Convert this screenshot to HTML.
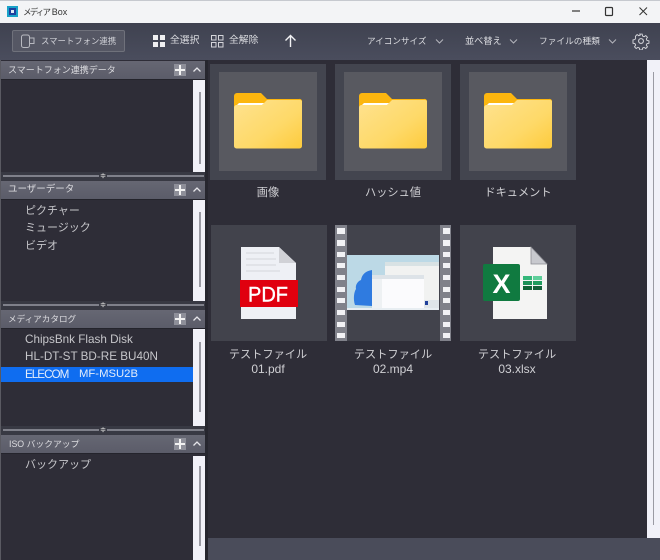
<!DOCTYPE html>
<html lang="ja"><head><meta charset="utf-8"><title>メディア Box</title>
<style>
html,body{margin:0;padding:0}
body{width:660px;height:560px;position:relative;overflow:hidden;background:#2e2d37;font-family:"Liberation Sans","Noto Sans CJK JP",sans-serif;color:#d4d4d8}
.a{position:absolute}
.t{position:absolute;white-space:nowrap}
.hd{position:absolute;left:1px;width:204px;height:19px;background:linear-gradient(#666773,#5b5c69);border-bottom:1px solid #24242c;box-sizing:border-box}
.hd span{position:absolute;left:7px;top:2px;font-size:9px;line-height:14px;color:#dcdce0;white-space:nowrap}
.plus{position:absolute;left:173px;top:3px;width:12px;height:12px;background:#8e8f99}
.plus:before{content:"";position:absolute;left:1px;right:1px;top:5px;height:1.5px;background:#f2f2f2}
.plus:after{content:"";position:absolute;top:1px;bottom:1px;left:5px;width:1.5px;background:#f2f2f2}
.hd svg{position:absolute;left:191px;top:5px}
.sb{position:absolute;left:193px;width:12px;background:#f1f1f8}
.sb i{position:absolute;left:6px;width:2px;background:#9a9aa3;display:block}
.sp{position:absolute;left:1px;width:204px;height:9px;background:#383943}
.sp:before{content:"";position:absolute;left:2px;right:1px;top:3px;height:2px;background:#7f808a}
.sp b{position:absolute;left:98px;top:0;width:8px;height:9px;background:#383943;color:#ccc;font:bold 7px/9px "Liberation Sans",sans-serif;text-align:center}
.li{position:absolute;left:25px;font-size:11px;line-height:16px;color:#c6c6ca;white-space:nowrap}
.la{font-size:11.7px}
.o{position:absolute;width:116px;height:116px;background:#43454f}
.in{position:absolute;left:9px;top:8px;width:98px;height:99px;background:#585960}
.lb{position:absolute;width:124px;text-align:center;font-size:12px;line-height:17px;color:#d0d0d4}
.lb span{font-size:11.2px}
.tb{position:absolute;top:34px;font-size:10px;line-height:14px;color:#dcdde1;white-space:nowrap}
</style></head><body>
<!-- title bar -->
<div class="a" style="left:0;top:0;width:660px;height:23px;background:#f3f4f6;border-top:1px solid #c6c9cf;box-sizing:border-box"></div>
<div class="a" style="left:7px;top:6px;width:11px;height:11px;background:#19a2c9"></div>
<div class="a" style="left:9px;top:8px;width:7px;height:7px;background:#1d3f9e"></div>
<div class="a" style="left:11px;top:10px;width:3px;height:3px;background:#dfeaf5"></div>
<div class="t" style="left:23px;top:5px;font-size:9px;line-height:14px;color:#333"><span style="font-size:8.500px;letter-spacing:-1.800px">メディア</span> Box</div>
<svg class="a" style="left:570px;top:4px" width="90" height="14" fill="none" stroke="#333">
<path d="M2 7h8" stroke-width="1.2"/><rect x="35.500" y="3.500" width="7" height="8" rx="1" stroke-width="1.2"/><path d="M69.500 3.500l7.500 7.500M77 3.500l-7.500 7.500" stroke-width="1"/></svg>
<!-- toolbar -->
<div class="a" style="left:0;top:23px;width:660px;height:37px;background:linear-gradient(#3f4250,#4a4d5d)"></div>
<div class="a" style="left:12px;top:30px;width:113px;height:22px;box-sizing:border-box;background:#555764;border:1px solid #6f717b;border-radius:2px"></div>
<svg class="a" style="left:20px;top:34px" width="16" height="15" fill="none" stroke="#b8b9c0"><rect x="1.500" y="1" width="8" height="12.500" rx="2"/><path d="M9.500 4h4.500v5.500h-4.500"/></svg>
<div class="tb" style="left:41px;font-size:8.400px;color:#cfd0d6">スマートフォン連携</div>
<svg class="a" style="left:153px;top:35px" width="12" height="12" fill="#f0f0f2"><rect width="5" height="5"/><rect x="7" width="5" height="5"/><rect y="7" width="5" height="5"/><rect x="7" y="7" width="5" height="5"/></svg>
<div class="tb" style="left:170px;font-size:9.800px">全選択</div>
<svg class="a" style="left:211px;top:35px" width="13" height="13" fill="none" stroke="#d5d5da"><rect x=".5" y=".5" width="4.500" height="4.500"/><rect x="7.500" y=".5" width="4.500" height="4.500"/><rect x=".5" y="7.500" width="4.500" height="4.500"/><rect x="7.500" y="7.500" width="4.500" height="4.500"/></svg>
<div class="tb" style="left:229px;font-size:9.800px">全解除</div>
<svg class="a" style="left:284px;top:34px" width="13" height="14" fill="none" stroke="#f2f2f4" stroke-width="1.400"><path d="M6.500 13V1.500M1.500 6.500l5-5 5 5"/></svg>
<div class="tb" style="left:367px;font-size:8.600px">アイコンサイズ</div>
<div class="tb" style="left:465px;font-size:9.200px">並べ替え</div>
<div class="tb" style="left:539px;font-size:8.700px">ファイルの種類</div>
<svg class="a" style="left:435px;top:38px" width="190" height="7" fill="none" stroke="#b4b5bc"><path d="M1 1.500l3.500 3.500L8 1.500"/><path d="M75 1.500l3.500 3.500L82 1.500"/><path d="M174 1.500l3.500 3.500L181 1.500"/></svg>
<svg class="a" style="left:632px;top:32px" width="18" height="18" viewBox="0 0 24 24" fill="none" stroke="#d8d9de" stroke-width="1.400"><circle cx="12" cy="12" r="3.200"/><path d="M10.200 1.500h3.600l.6 3 2.300 1 2.600-1.700 2.500 2.600-1.700 2.500 1 2.300 3 .6v3.600l-3 .6-1 2.300 1.700 2.600-2.500 2.500-2.600-1.700-2.300 1-.6 3h-3.600l-.6-3-2.300-1-2.600 1.700-2.500-2.500 1.700-2.600-1-2.300-3-.6V10.400l3-.6 1-2.300L3.600 4.900l2.500-2.600 2.600 1.700 2.300-1z" transform="translate(1.400 1.400) scale(.88)"/></svg>
<!-- left panels -->
<div class="a" style="left:0;top:60px;width:1px;height:500px;background:#5a5a62"></div>
<div class="a" style="left:205px;top:60px;width:3px;height:500px;background:#26262e"></div>
<div class="hd" style="top:61px"><span>スマートフォン連携データ</span><div class="plus"></div><svg width="10" height="7" fill="none" stroke="#e6e6ea" stroke-width="1.300"><path d="M1.500 5.500L5 2l3.500 3.500"/></svg></div>
<div class="sb" style="top:80px;height:92px"><i style="top:12px;height:72px"></i></div>
<div class="sp" style="top:172px"><b>≑</b></div>
<div class="hd" style="top:181px"><span style="font-size:9.500px">ユーザーデータ</span><div class="plus"></div><svg width="10" height="7" fill="none" stroke="#e6e6ea" stroke-width="1.300"><path d="M1.500 5.500L5 2l3.500 3.500"/></svg></div>
<div class="sb" style="top:200px;height:101px"><i style="top:12px;height:75px"></i></div>
<div class="li" style="top:203px">ピクチャー</div>
<div class="li" style="top:220px">ミュージック</div>
<div class="li" style="top:238px">ビデオ</div>
<div class="sp" style="top:301px"><b>≑</b></div>
<div class="hd" style="top:310px"><span style="font-size:8.600px">メディアカタログ</span><div class="plus"></div><svg width="10" height="7" fill="none" stroke="#e6e6ea" stroke-width="1.300"><path d="M1.500 5.500L5 2l3.500 3.500"/></svg></div>
<div class="sb" style="top:329px;height:97px"><i style="top:13px;height:70px"></i></div>
<div class="li la" style="top:332px">ChipsBnk Flash Disk</div>
<div class="li la" style="top:349px">HL-DT-ST BD-RE BU40N</div>
<div class="a" style="left:1px;top:367px;width:192px;height:15px;background:#0f6df0"></div>
<div class="li la" style="top:367px;line-height:15px;color:#e4edfa;letter-spacing:-1px">ELECOM</div>
<div class="li" style="left:79px;top:367px;line-height:15px;font-size:11.300px;color:#e4edfa">MF-MSU2B</div>
<div class="sp" style="top:426px;height:9px"><b>≑</b></div>
<div class="hd" style="top:435px"><span style="font-size:8.800px;left:8px">ISO バックアップ</span><div class="plus"></div><svg width="10" height="7" fill="none" stroke="#e6e6ea" stroke-width="1.300"><path d="M1.500 5.500L5 2l3.500 3.500"/></svg></div>
<div class="sb" style="top:456px;height:104px"><i style="top:10px;height:80px"></i></div>
<div class="li" style="top:457px">バックアップ</div>
<!-- main folder row -->
<svg width="0" height="0" style="position:absolute"><defs><linearGradient id="fg" x1="0" y1="0" x2="1" y2="1"><stop offset="0" stop-color="#ffe28f"/><stop offset=".6" stop-color="#fed968"/><stop offset="1" stop-color="#fdcb3c"/></linearGradient></defs></svg>
<div class="o" style="left:210px;top:64px"><div class="in"></div>
<svg class="a" style="left:23px;top:28px" width="70" height="57"><path d="M1 4a3 3 0 0 1 3-3h24l6 6h32a2.500 2.500 0 0 1 3 3v10H1z" fill="#fcb60f"/><path d="M1 16c0-2 1-3 3-3h25l5-5h33a2 2 0 0 1 2 2v44a2.500 2.500 0 0 1-2.500 2.500H3.500A2.500 2.500 0 0 1 1 54z" fill="url(#fg)"/><path d="M4 13h25l2-2H6z" fill="#fff"/></svg></div>
<div class="o" style="left:335px;top:64px"><div class="in"></div>
<svg class="a" style="left:23px;top:28px" width="70" height="57"><path d="M1 4a3 3 0 0 1 3-3h24l6 6h32a2.500 2.500 0 0 1 3 3v10H1z" fill="#fcb60f"/><path d="M1 16c0-2 1-3 3-3h25l5-5h33a2 2 0 0 1 2 2v44a2.500 2.500 0 0 1-2.500 2.500H3.500A2.500 2.500 0 0 1 1 54z" fill="url(#fg)"/><path d="M4 13h25l2-2H6z" fill="#fff"/></svg></div>
<div class="o" style="left:460px;top:64px"><div class="in"></div>
<svg class="a" style="left:23px;top:28px" width="70" height="57"><path d="M1 4a3 3 0 0 1 3-3h24l6 6h32a2.500 2.500 0 0 1 3 3v10H1z" fill="#fcb60f"/><path d="M1 16c0-2 1-3 3-3h25l5-5h33a2 2 0 0 1 2 2v44a2.500 2.500 0 0 1-2.500 2.500H3.500A2.500 2.500 0 0 1 1 54z" fill="url(#fg)"/><path d="M4 13h25l2-2H6z" fill="#fff"/></svg></div>
<div class="lb" style="left:206px;top:184px"><span>画像</span></div>
<div class="lb" style="left:331px;top:184px"><span>ハッシュ値</span></div>
<div class="lb" style="left:456px;top:184px"><span>ドキュメント</span></div>
<!-- second row -->
<div class="o" style="left:211px;top:225px;background:#42434c"></div>
<svg class="a" style="left:238px;top:245px" width="62" height="76"><path d="M3 2h38l17 16v56H3z" fill="#eef0f5"/><path d="M41 2l17 16H41z" fill="#d0d1d6"/><path d="M8 8h28M8 14h30M8 20h30M8 26h34" stroke="#d4d6dc"/><rect x="2" y="35" width="58" height="27" fill="#e0000f"/><text x="10" y="56.500" font-family="Liberation Sans" font-size="21" fill="#fff" stroke="#fff" stroke-width=".4" textLength="40" lengthAdjust="spacingAndGlyphs">PDF</text></svg>
<div class="o" style="left:335px;top:225px;background:#42434c"></div>
<svg class="a" style="left:335px;top:225px" width="116" height="116"><rect width="12" height="116" fill="#80818a"/><rect x="105" width="11" height="116" fill="#80818a"/>
<g fill="#f2f2f5"><rect x="2" y="3" width="8" height="6"/><rect x="2" y="15" width="8" height="6"/><rect x="2" y="27" width="8" height="5"/><rect x="2" y="38" width="8" height="5"/><rect x="2" y="50" width="8" height="5"/><rect x="2" y="62" width="8" height="5"/><rect x="2" y="73" width="8" height="5"/><rect x="2" y="85" width="8" height="5"/><rect x="2" y="97" width="8" height="5"/><rect x="2" y="108" width="8" height="5"/><rect x="108" y="3" width="7" height="6"/><rect x="108" y="15" width="7" height="6"/><rect x="108" y="27" width="7" height="5"/><rect x="108" y="38" width="7" height="5"/><rect x="108" y="50" width="7" height="5"/><rect x="108" y="62" width="7" height="5"/><rect x="108" y="73" width="7" height="5"/><rect x="108" y="85" width="7" height="5"/><rect x="108" y="97" width="7" height="5"/><rect x="108" y="108" width="7" height="5"/></g>
<rect x="12" y="30" width="92" height="54" fill="#bcd9e6"/>
<path d="M37 45c-6 1-10 4-11 10-3 1-6 5-5 9-2 3-3 10-1 16l17 1z" fill="#2f7be0"/>
<rect x="12" y="83" width="92" height="2" fill="#e8eef2"/>
<rect x="50" y="37" width="54" height="38" fill="#f1f2f1"/><rect x="50" y="37" width="54" height="4" fill="#d8e2e4"/>
<rect x="37" y="50" width="52" height="33" fill="#fbfbfd"/><rect x="37" y="50" width="52" height="4" fill="#dde3e8"/><rect x="37" y="54" width="10" height="29" fill="#eef1f3"/>
<rect x="89" y="75" width="15" height="8" fill="#dfe5e9"/><rect x="90" y="76" width="3" height="4" fill="#1f3f9a"/></svg>
<div class="o" style="left:460px;top:225px;background:#42434c"></div>
<svg class="a" style="left:482px;top:246px" width="66" height="74"><path d="M11 1h38l16 17v55H11z" fill="#f4f4f3"/><path d="M49 1l16 17H49z" fill="#c8c9ce" stroke="#8b8c92" stroke-width=".8"/><rect x="1" y="18" width="37" height="37" rx="2" fill="#107a40"/><text x="19.500" y="47" font-family="Liberation Sans" font-size="27" font-weight="bold" fill="#fff" text-anchor="middle">X</text>
<g><rect x="41" y="30" width="9" height="4" fill="#35b77a"/><rect x="51" y="30" width="9" height="4" fill="#5fcf9a"/><rect x="41" y="35" width="9" height="4" fill="#1b9157"/><rect x="51" y="35" width="9" height="4" fill="#1f9c5e"/><rect x="41" y="40" width="9" height="4" fill="#0f6336"/><rect x="51" y="40" width="9" height="4" fill="#14603a"/></g></svg>
<div class="lb" style="left:206px;top:346px"><span>テストファイル</span></div>
<div class="lb" style="left:206px;top:361px">01.pdf</div>
<div class="lb" style="left:331px;top:346px"><span>テストファイル</span></div>
<div class="lb" style="left:331px;top:361px">02.mp4</div>
<div class="lb" style="left:455px;top:346px"><span>テストファイル</span></div>
<div class="lb" style="left:455px;top:361px">03.xlsx</div>
<!-- right scrollbar and bottom -->
<div class="sb" style="left:647px;top:60px;width:13px;height:478px"><i style="top:12px;height:453px;left:6px;width:1px"></i></div>
<div class="a" style="left:208px;top:538px;width:452px;height:22px;background:#4a4c5a"></div>
</body></html>
